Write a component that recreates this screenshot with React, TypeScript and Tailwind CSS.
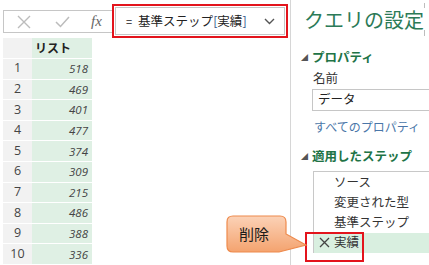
import React from "react";

const rows = [518, 469, 401, 477, 374, 309, 215, 486, 388, 336];

const steps = [
  { label: "ソース", active: false },
  { label: "変更された型", active: false },
  { label: "基準ステップ", active: false },
  { label: "実績", active: true }
];

const jp = { fontFamily: '"Noto Sans CJK JP", "Noto Sans", sans-serif' };

function FormulaBar() {
  return (
    <div className="flex items-start pt-[4px]">
      <div className="ml-[3px] mt-[6px] flex h-[23px] w-[109px] items-center border border-r-0 border-[#c6c6c6] bg-white">
        <svg width="14" height="14" viewBox="0 0 14 14" className="ml-[13px]">
          <path d="M1 1 L13 13 M13 1 L1 13" stroke="#bcbcbc" strokeWidth="1.4" fill="none" />
        </svg>
        <svg width="15" height="12" viewBox="0 0 15 12" className="ml-[24px]">
          <path d="M1 6 L5.5 10.5 L14 1" stroke="#bcbcbc" strokeWidth="1.5" fill="none" />
        </svg>
        <span
          className="ml-[21px] text-[15px] italic leading-none text-[#666]"
          style={{ fontFamily: '"Liberation Serif", serif' }}
        >
          fx
        </span>
      </div>
      <div className="h-[34px] w-[176px] border-2 border-[#e3141c] p-[1px]">
        <div className="flex h-full items-center border border-[#c6c6c6] bg-white pl-[10px] pr-[9px] text-[12.5px] text-[#222]" style={jp}>
          <span className="mr-[6px] text-[11px]">=</span>
          <span>基準ステップ</span>
          <span className="text-[#34568a]">[</span>
          <span>実績</span>
          <span className="text-[#34568a]">]</span>
          <svg width="11" height="7" viewBox="0 0 11 7" className="ml-auto">
            <path d="M1 1 L5.5 5.5 L10 1" stroke="#555" strokeWidth="1.4" fill="none" />
          </svg>
        </div>
      </div>
    </div>
  );
}

function Grid() {
  return (
    <div className="ml-[3px] w-[89px] text-[#444]">
      <div className="flex h-[21px] border-b border-white">
        <div className="w-[29px] bg-[#f2f2f2]" />
        <div className="flex flex-1 items-center bg-[#dff0e4] pl-[3px] text-[12px] font-bold text-[#222]" style={jp}>
          リスト
        </div>
      </div>
      {rows.map((v, i) => (
        <div key={i} className="flex h-[20.6px] border-b border-white">
          <div
            className="flex w-[29px] items-center justify-center bg-[#f2f2f2] text-[12.5px]"
            style={{ fontFamily: '"Open Sans", sans-serif' }}
          >
            {i + 1}
          </div>
          <div
            className="flex flex-1 items-center justify-end bg-[#dff0e4] pr-[4px] text-[11.5px] italic"
            style={{ fontFamily: '"Open Sans", sans-serif' }}
          >
            {v}
          </div>
        </div>
      ))}
    </div>
  );
}

function Section({ title }: { title: string }) {
  return (
    <div className="flex items-center">
      <span className="w-[7px] text-[7px] leading-none text-[#555]">◢</span>
      <span className="ml-[4px] text-[12.5px] font-bold text-[#217346]">{title}</span>
    </div>
  );
}

function SettingsPanel() {
  return (
    <div className="h-full flex-1 border-l border-[#d6d6d6] pl-[10px]" style={jp}>
      <div className="mt-[6px] pl-[3px] text-[20px] leading-[28px] text-[#2b7a57]">クエリの設定</div>
      <div className="mt-[14px]">
        <Section title="プロパティ" />
      </div>
      <div className="mt-[2px] pl-[12px] text-[12.5px] leading-[18px] text-[#333]">名前</div>
      <div className="ml-[11px] mt-[2px] flex h-[22px] items-center border border-r-0 border-[#c6c6c6] pl-[5px] text-[12.5px] text-[#222]">
        データ
      </div>
      <div className="mt-[7px] pl-[13px] text-[12px] leading-[18px] text-[#4a76a8]">すべてのプロパティ</div>
      <div className="mt-[11px]">
        <Section title="適用したステップ" />
      </div>
      <div className="ml-[12px] mt-[5px] border-l border-t border-[#c8c8c8] pt-[1px]">
        {steps.map((s) => (
          <div
            key={s.label}
            className={
              "flex h-[20px] items-center text-[12.5px] text-[#333] " + (s.active ? "bg-[#d9efe0]" : "")
            }
          >
            <span className="flex w-[20px] justify-center">
              {s.active && (
                <svg width="11" height="11" viewBox="0 0 11 11">
                  <path d="M1 1 L10 10 M10 1 L1 10" stroke="#444" strokeWidth="1.3" fill="none" />
                </svg>
              )}
            </span>
            <span>{s.label}</span>
          </div>
        ))}
      </div>
    </div>
  );
}

export default function App() {
  return (
    <div className="relative flex h-[265px] w-[429px] overflow-hidden bg-white">
      <div className="w-[290px] shrink-0">
        <FormulaBar />
        <Grid />
      </div>
      <SettingsPanel />

      {/* pane edge marks */}
      <span className="absolute left-[424px] top-[3px] h-[5px] w-px bg-[#bdbdbd]" />
      <span className="absolute left-[424px] top-[30px] h-[6px] w-px bg-[#bdbdbd]" />

      {/* highlight on the removed step */}
      <div className="absolute left-[305px] top-[232px] h-[30px] w-[59px] border-2 border-[#e3141c]" />

      {/* callout */}
      <svg width="84" height="42" viewBox="0 0 84 42" className="absolute left-[225px] top-[214px]">
        <defs>
          <linearGradient id="callout" x1="0" y1="0" x2="0" y2="1">
            <stop offset="0" stopColor="#fbd2b7" />
            <stop offset="1" stopColor="#f4a36f" />
          </linearGradient>
        </defs>
        <path
          d="M8 2 H55 Q61 2 61 8 V20 L81 31 L54 38 H8 Q2 38 2 32 V8 Q2 2 8 2 Z"
          fill="url(#callout)"
          stroke="#ee8a4c"
          strokeWidth="1.2"
        />
      </svg>
      <div className="absolute left-[239px] top-[223px] text-[15px] leading-[22px] text-[#1a1a1a]" style={jp}>
        削除
      </div>
    </div>
  );
}
